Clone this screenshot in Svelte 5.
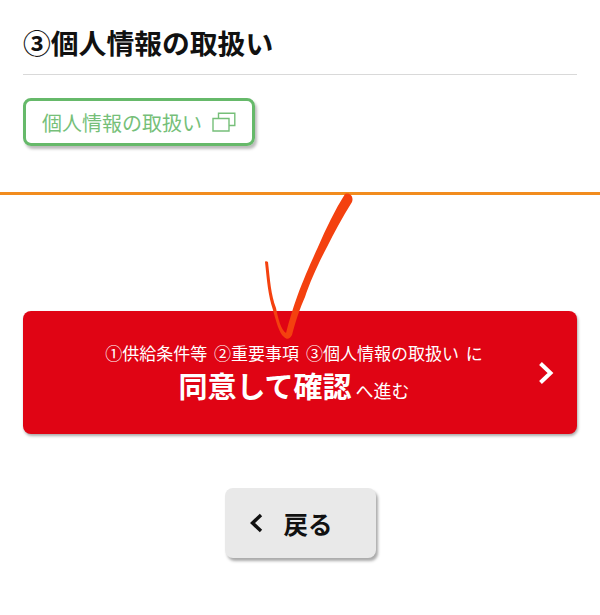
<script>
  const jp = "個人情報の取扱い";
</script>

<div class="page">
  <section class="terms">
    <h2>③{jp}</h2>
    <a class="outline-btn" href="#terms">
      <span>{jp}</span>
      <svg width="24" height="20" viewBox="0 0 24 20" fill="none" stroke="currentColor" stroke-width="1.4">
        <path d="M1 6.5h16v12.5H1z" />
        <path d="M6.5 6.5V1.2h16.3v12.3H17" />
      </svg>
    </a>
  </section>

  <section class="actions">
    <button class="agree">
      <span class="note">①供給条件等 ②重要事項 ③{jp} に</span>
      <span class="main"><strong>同意して確認</strong><small>へ進む</small></span>
      <svg class="next" width="16" height="24" viewBox="0 0 16 24" fill="none" stroke="currentColor" stroke-width="4">
        <path d="M2.5 2.5 12.5 12 2.5 21.5" />
      </svg>
    </button>
    <button class="back">
      <svg width="14" height="20" viewBox="0 0 14 20" fill="none" stroke="currentColor" stroke-width="3.4">
        <path d="M12 2 3.5 10 12 18" />
      </svg>
      <span>戻る</span>
    </button>
  </section>

  <svg class="check" width="100" height="160" viewBox="0 0 100 160">
    <path fill="#f4410f" d="M3 72C5 90 6 105 11 120 14 131 17 143 22 147 25 150 28 149 30 145 34 130 38 118 43 107 48 92 56 74 65 57 72 43 80 28 90 12 92 7 88 2 83 4 73 20 64 38 56 57 50 70 42 88 35 107 31 118 27 131 24 143 19 140 16 128 14 118 9 105 8 90 6 72 5 71 3 71 3 72Z" />
  </svg>
</div>

<style>
  :global(body) {
    margin: 0;
    background: #fff;
  }

  .page {
    position: relative;
    height: 615px;
    overflow: hidden;
    font-family: "Noto Sans CJK JP", "Liberation Sans", sans-serif;
  }

  .terms {
    height: 195px;
    box-sizing: border-box;
    padding: 0 23px;
    border-bottom: 3px solid #f28c1e;
  }

  h2 {
    height: 75px;
    box-sizing: border-box;
    margin: 0 0 23px;
    padding-top: 23px;
    border-bottom: 1px solid #d9d9d9;
    color: #111;
    font-size: 27.8px;
    line-height: 38px;
    font-weight: 700;
  }

  .outline-btn {
    display: inline-flex;
    align-items: center;
    gap: 10px;
    height: 48px;
    box-sizing: border-box;
    padding: 0 16px;
    border: 3px solid #66b96a;
    border-radius: 8px;
    box-shadow: 2px 3px 3px #bbb;
    color: #76bf79;
    font-size: 20px;
    text-decoration: none;
  }

  .actions {
    display: flex;
    flex-direction: column;
    align-items: center;
    gap: 54px;
    padding: 116px 23px 0;
  }

  button {
    border: 0;
    font-family: inherit;
  }

  .agree {
    position: relative;
    display: flex;
    flex-direction: column;
    align-items: center;
    width: 100%;
    height: 123px;
    box-sizing: border-box;
    padding: 30px 12px 0 0;
    border-radius: 8px;
    background: #e00414;
    box-shadow: 1px 2px 3px #aaa;
    color: #fff;
  }

  .note {
    font-size: 17px;
    line-height: 24px;
    word-spacing: 3px;
    white-space: nowrap;
  }

  .main {
    display: flex;
    align-items: baseline;
    gap: 4px;
    line-height: 40px;
  }

  strong {
    font-size: 29px;
    font-weight: 700;
  }

  small {
    font-size: 18px;
  }

  .next {
    position: absolute;
    right: 23px;
    top: 50px;
  }

  .back {
    display: flex;
    align-items: center;
    gap: 21px;
    width: 151px;
    height: 70px;
    box-sizing: border-box;
    padding: 0 0 0 24px;
    border-radius: 8px;
    background: #e9e9e9;
    box-shadow: 2px 3px 3px #aaa;
    color: #111;
    font-size: 24.5px;
    font-weight: 700;
  }

  .check {
    position: absolute;
    left: 262px;
    top: 190px;
  }
</style>
